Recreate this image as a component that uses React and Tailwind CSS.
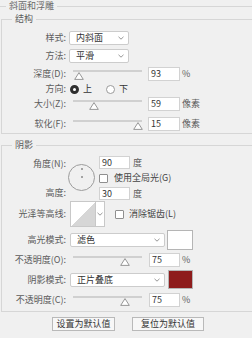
import React from "react";

function Chevron() {
  return (
    <svg width="6" height="4" viewBox="0 0 6 4" className="shrink-0">
      <path d="M0.5 0.8 L3 3.2 L5.5 0.8" stroke="#8a8a8a" strokeWidth="0.9" fill="none" />
    </svg>
  );
}

function Label({ children }) {
  return <div className="w-[64px] shrink-0 text-right whitespace-nowrap">{children}</div>;
}

function Select({ w, children }) {
  return (
    <div className={`${w} h-[14px] bg-white border border-[#cccccc] rounded-[2px] flex items-center pl-[6px] pr-[4px] text-[#333]`}>
      <span>{children}</span>
      <span className="ml-auto flex"><Chevron /></span>
    </div>
  );
}

function Field({ w = "w-[32px]", h = "h-[14px]", children }) {
  return (
    <div className={`${w} ${h} bg-white border border-[#d2d2d2] flex items-center pl-[2px] text-[#333]`}>
      {children}
    </div>
  );
}

function Slider({ pos }) {
  return (
    <div className="relative w-[77px] h-[14px] shrink-0">
      <div className="ml-[4px] mt-[3px] w-[69px] h-[2px] bg-[#d0d0d0]" />
      <svg width="10" height="8" viewBox="0 0 10 8" className="absolute top-[5px]" style={{ left: pos }}>
        <path d="M5 0.6 L9.3 7.4 L0.7 7.4 Z" fill="#ffffff" stroke="#8c8c8c" strokeWidth="0.9" strokeLinejoin="round" />
      </svg>
    </div>
  );
}

function Checkbox() {
  return <div className="w-[9px] h-[9px] bg-white border border-[#8f8f8f] rounded-[1px] shrink-0" />;
}

export default function App() {
  return (
    <div className="w-[252px] h-[338px] overflow-hidden bg-[#f0f0f0] text-[9px] leading-[12px] text-[#5c5c5c] font-['Noto_Sans_CJK_SC',sans-serif]">
      <div className="flex items-center h-[12px]">
        <div className="w-[6px] h-px bg-[#d6d6d6]" />
        <div className="px-[3px] text-[#6a6a6a]">斜面和浮雕</div>
        <div className="flex-1 h-px bg-[#d6d6d6]" />
      </div>

      {/* 结构 */}
      <div className="mt-[7px] ml-[1px] w-[300px] border border-[#d6d6d6] pb-[2px]">
        <div className="-mt-[7px] ml-[10px] px-[3px] w-fit bg-[#f0f0f0]">结构</div>

        <div className="mt-[6px] flex items-center h-[14px] gap-[3px]">
          <Label>样式:</Label>
          <Select w="w-[60px]">内斜面</Select>
        </div>
        <div className="mt-[4px] flex items-center h-[14px] gap-[3px]">
          <Label>方法:</Label>
          <Select w="w-[60px]">平滑</Select>
        </div>
        <div className="mt-[4px] flex items-center h-[14px]">
          <Label>深度(D):</Label>
          <div className="ml-[3px] flex items-center">
            <Slider pos={5} />
            <div className="ml-[2px]"><Field>93</Field></div>
            <span className="ml-[2px]">%</span>
          </div>
        </div>
        <div className="mt-[1px] flex items-center h-[14px]">
          <Label>方向:</Label>
          <div className="ml-[4px] flex items-center">
            <div className="w-[9px] h-[9px] rounded-full border-[3px] border-[#2e2e2e] bg-white" />
            <span className="ml-[4px] text-[#333]">上</span>
            <div className="ml-[14px] w-[9px] h-[9px] rounded-full border border-[#9a9a9a] bg-white" />
            <span className="ml-[4px] text-[#333]">下</span>
          </div>
        </div>
        <div className="mt-[1px] flex items-center h-[14px]">
          <Label>大小(Z):</Label>
          <div className="ml-[3px] flex items-center">
            <Slider pos={20} />
            <div className="ml-[2px]"><Field>59</Field></div>
            <span className="ml-[2px]">像素</span>
          </div>
        </div>
        <div className="mt-[6px] flex items-center h-[14px]">
          <Label>软化(F):</Label>
          <div className="ml-[3px] flex items-center">
            <Slider pos={64} />
            <div className="ml-[2px]"><Field>15</Field></div>
            <span className="ml-[2px]">像素</span>
          </div>
        </div>
      </div>

      {/* 阴影 */}
      <div className="mt-[11px] ml-[1px] w-[300px] border border-[#d6d6d6] pb-[4px]">
        <div className="-mt-[7px] ml-[10px] px-[3px] w-fit bg-[#f0f0f0]">阴影</div>

        <div className="mt-[5px] flex h-[44px]">
          <div className="w-[64px] shrink-0 flex flex-col items-end">
            <div className="mt-[2px]">角度(N):</div>
            <div className="mt-[17px]">高度:</div>
          </div>
          <div className="ml-[2px] mt-[8px] w-[27px] h-[27px] rounded-full border border-[#9c9c9c] flex flex-col items-center">
            <div className="mt-[3px] w-[2px] h-[2px] rounded-full bg-[#8a8a8a]" />
            <div className="mt-[6px] w-[2px] h-[2px] rounded-full bg-[#8a8a8a]" />
          </div>
          <div className="ml-[4px] flex flex-col">
            <div className="flex items-center">
              <Field w="w-[31px]" h="h-[13px]">90</Field>
              <span className="ml-[3px]">度</span>
            </div>
            <div className="mt-[3px] h-[12px] flex items-center">
              <Checkbox />
              <span className="ml-[6px] text-[#444]">使用全局光(G)</span>
            </div>
            <div className="mt-[3px] flex items-center">
              <Field w="w-[31px]" h="h-[13px]">30</Field>
              <span className="ml-[3px]">度</span>
            </div>
          </div>
        </div>

        <div className="mt-[1px] flex items-center h-[26px]">
          <Label>光泽等高线:</Label>
          <div className="ml-[4px] flex h-[26px]">
            <div className="w-[26px] h-[26px] border border-[#c8c8c8] bg-[linear-gradient(to_top_left,#d6d6d6_50%,#ffffff_50%)]" />
            <div className="w-[9px] h-[26px] border border-l-0 border-[#c8c8c8] bg-white flex items-center justify-center">
              <Chevron />
            </div>
          </div>
          <div className="ml-[10px]"><Checkbox /></div>
          <span className="ml-[5px] text-[#444]">消除锯齿(L)</span>
        </div>

        <div className="mt-[3px] flex items-center h-[20px]">
          <Label>高光模式:</Label>
          <div className="ml-[4px]"><Select w="w-[95px]">滤色</Select></div>
          <div className="ml-[2px] w-[26px] h-[20px] bg-white border border-[#b5b5b5]" />
        </div>

        <div className="mt-[3px] flex items-center h-[14px]">
          <Label>不透明度(O):</Label>
          <div className="ml-[3px] flex items-center">
            <Slider pos={51} />
            <div className="ml-[3px]"><Field w="w-[31px]">75</Field></div>
            <span className="ml-[2px]">%</span>
          </div>
        </div>

        <div className="mt-[3px] flex items-center h-[19px]">
          <Label>阴影模式:</Label>
          <div className="ml-[4px]"><Select w="w-[95px]">正片叠底</Select></div>
          <div className="ml-[3px] w-[25px] h-[19px] bg-[#8e1c1c] border border-[#b5b5b5]" />
        </div>

        <div className="mt-[4px] flex items-center h-[14px]">
          <Label>不透明度(C):</Label>
          <div className="ml-[3px] flex items-center">
            <Slider pos={51} />
            <div className="ml-[3px]"><Field w="w-[31px]">75</Field></div>
            <span className="ml-[2px]">%</span>
          </div>
        </div>
      </div>

      <div className="mt-[5px] flex text-[#333]">
        <div className="ml-[52px] w-[63px] h-[14px] border border-[#b9b9b9] bg-[#f7f7f7] flex items-center justify-center">设置为默认值</div>
        <div className="ml-[17px] w-[72px] h-[14px] border border-[#b9b9b9] bg-[#f7f7f7] flex items-center justify-center">复位为默认值</div>
      </div>
    </div>
  );
}
